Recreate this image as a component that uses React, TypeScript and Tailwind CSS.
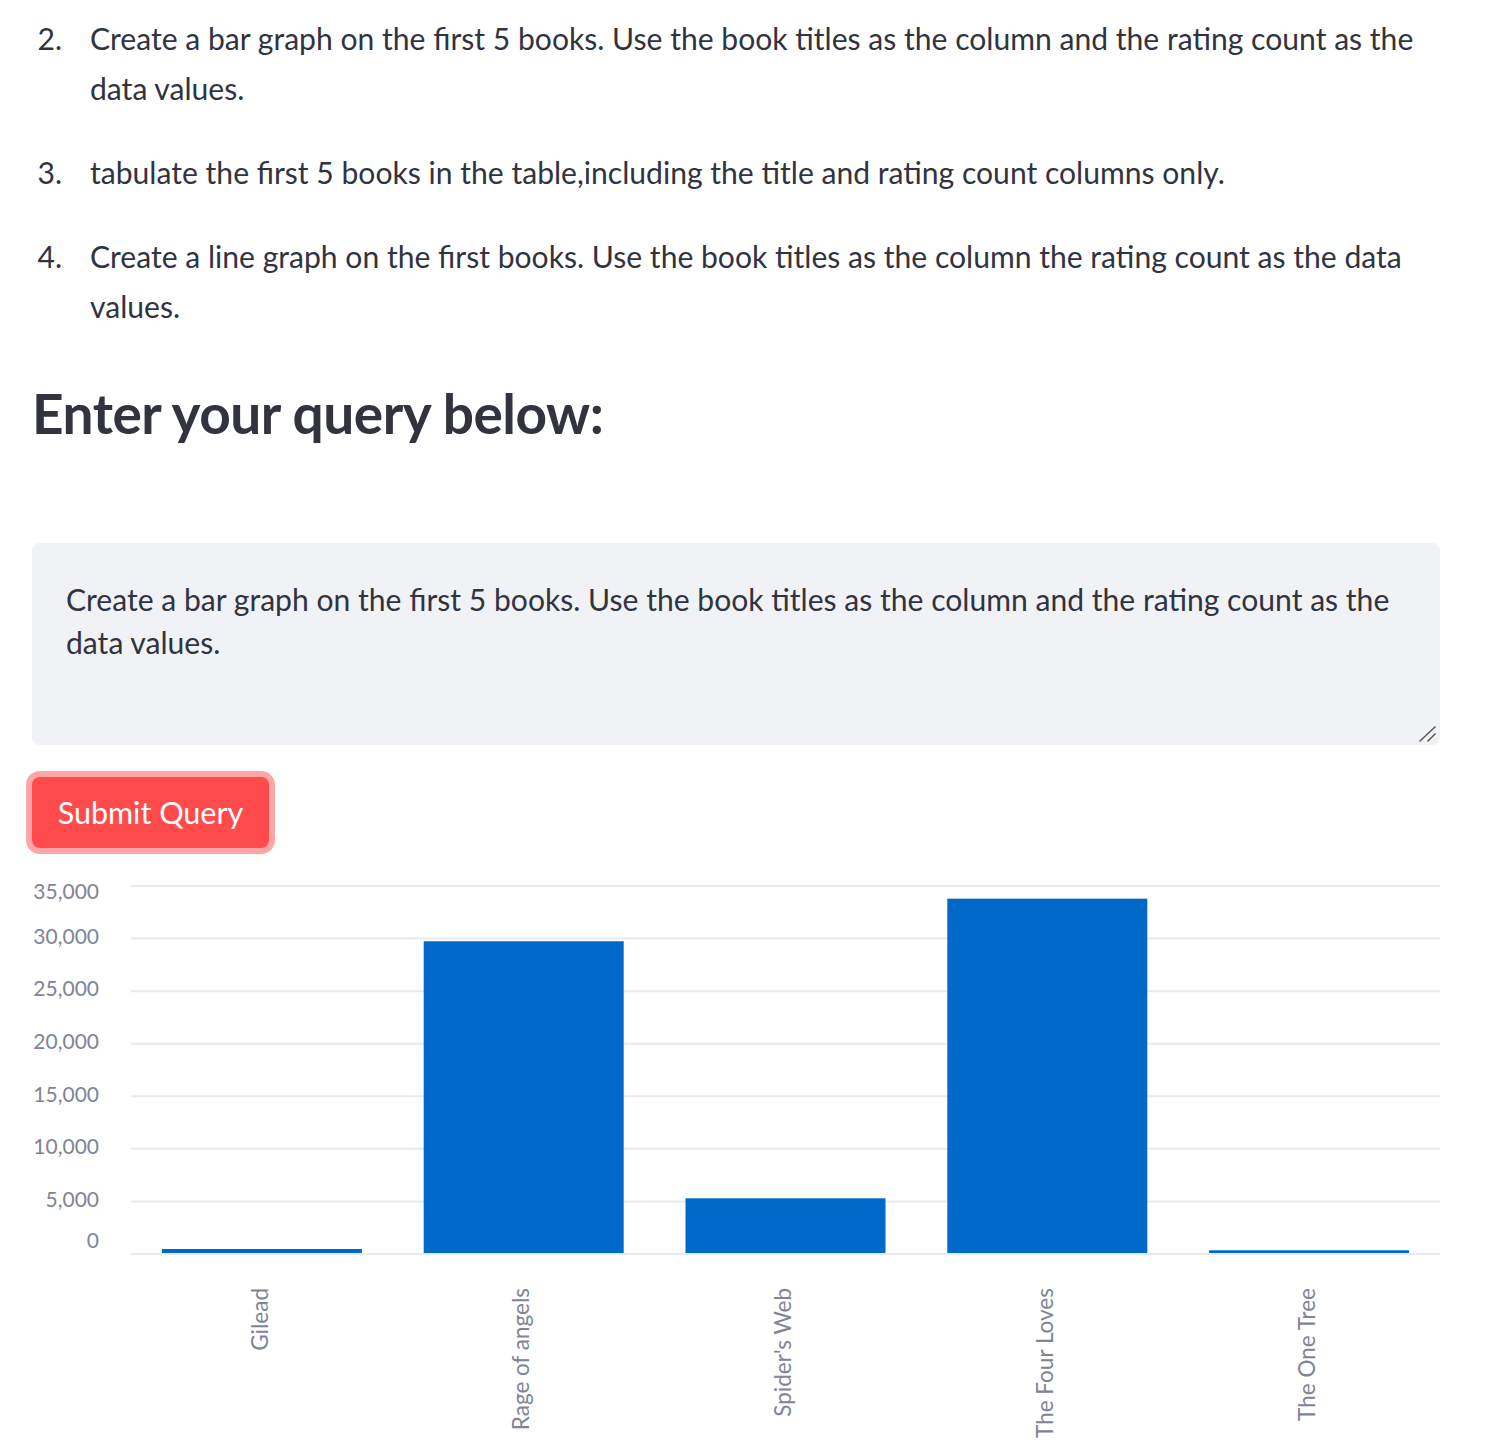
import React from 'react';

const books = [
  { title: 'Gilead', count: 380 },
  { title: 'Rage of angels', count: 29650 },
  { title: "Spider's Web", count: 5200 },
  { title: 'The Four Loves', count: 33700 },
  { title: 'The One Tree', count: 260 },
];

const ticks = [35000, 30000, 25000, 20000, 15000, 10000, 5000, 0];

// chart coordinates are local to the svg (page x - 32, page y - 870)
const plotLeft = 99;
const plotRight = 1408;
const baseY = 383;
const pxPerUnit = 368 / 35000;

const BarChart: React.FC = () => {
  const band = (plotRight - plotLeft) / books.length;
  return (
    <svg width={1408} height={584} className="block">
      {ticks.map((t) => {
        const y = baseY - t * pxPerUnit;
        let ly = y;
        if (t === 35000) ly = y + 8;
        if (t === 0) ly = y - 11;
        return (
          <g key={t}>
            <line x1={plotLeft} x2={plotRight} y1={y} y2={y} stroke="#e6eaf1" strokeWidth={2} />
            <text x={67} y={ly} textAnchor="end" dominantBaseline="middle" fill="#808495" fontSize={21}>
              {t.toLocaleString('en-US')}
            </text>
          </g>
        );
      })}
      {books.map((b, i) => {
        const x = plotLeft + i * band;
        const h = b.count * pxPerUnit;
        const cx = x + band / 2;
        return (
          <g key={b.title}>
            <rect x={x + (band - 200) / 2} y={baseY - 1 - h} width={200} height={h} fill="#0068c9" />
            <text
              transform={`translate(${cx}, 417) rotate(-90)`}
              textAnchor="end"
              dominantBaseline="middle"
              fill="#808495"
              fontSize={22.5}
            >
              {b.title}
            </text>
          </g>
        );
      })}
    </svg>
  );
};

const Item: React.FC<{ n: number; children: React.ReactNode }> = ({ n, children }) => (
  <li className="flex">
    <span className="w-[58px] shrink-0 text-right pr-[28px]">{n}.</span>
    <span className="flex-1">{children}</span>
  </li>
);

const App: React.FC = () => {
  return (
    <div className="bg-white h-[1454px] w-full overflow-hidden font-['Lato',sans-serif] text-[#31333f]">
      <div className="pl-[32px] pr-[56px] pt-[13px]">
        <ol className="text-[30.1px] leading-[50px] flex flex-col gap-[34px]">
          <Item n={2}>
            Create a bar graph on the first 5 books. Use the book titles as the column and the rating count as the data values.
          </Item>
          <Item n={3}>tabulate the first 5 books in the table,including the title and rating count columns only.</Item>
          <Item n={4}>
            Create a line graph on the first books. Use the book titles as the column the rating count as the data values.
          </Item>
        </ol>

        <h3 className="mt-[49px] text-[55px] leading-[67px] font-bold tracking-[-0.5px]">Enter your query below:</h3>

        <div className="relative mt-[96px]">
          <textarea
            className="block w-full h-[202px] bg-[#f0f2f6] rounded-[8px] px-[34px] pt-[35px] text-[30.1px] leading-[43px] text-[#31333f] resize-none outline-none border-0"
            defaultValue="Create a bar graph on the first 5 books. Use the book titles as the column and the rating count as the data values."
          />
          <svg width={18} height={18} viewBox="0 0 18 18" className="absolute right-[3px] bottom-[2px] pointer-events-none">
            <line x1={1} y1={16} x2={16} y2={2} stroke="#5a5a5a" strokeWidth={1.6} strokeLinecap="round" />
            <line x1={9} y1={16} x2={16} y2={9} stroke="#5a5a5a" strokeWidth={1.6} strokeLinecap="round" />
          </svg>
        </div>

        <button className="mt-[32px] block h-[71px] w-[237px] rounded-[8px] bg-[#ff4b4b] text-white text-[30.5px] ring-[6px] ring-[#ffa5a5]">
          Submit Query
        </button>

        <div className="mt-[23px]">
          <BarChart />
        </div>
      </div>
    </div>
  );
};

export default App;
